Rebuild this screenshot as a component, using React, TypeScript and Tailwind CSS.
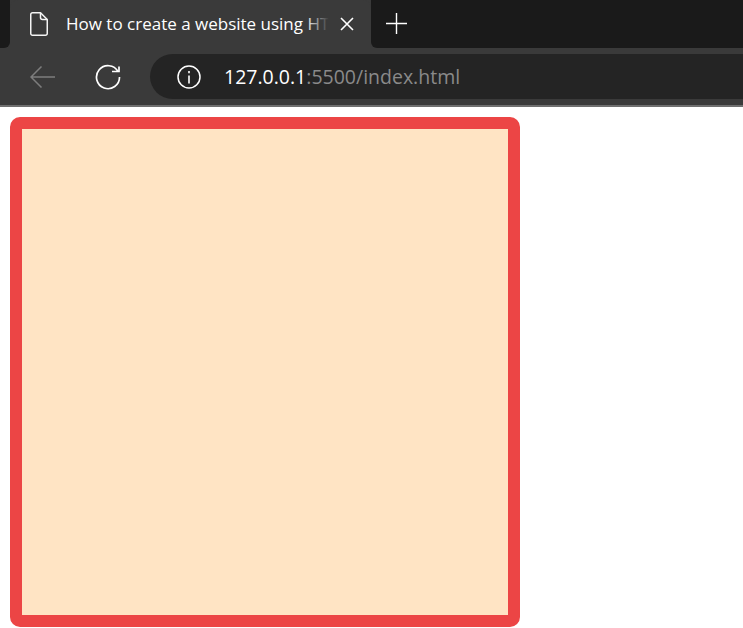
export default function App() {
  return (
    <div className="h-[628px] w-[743px] overflow-hidden bg-white font-['Open_Sans',sans-serif]">
      <div className="flex h-[48px] bg-[#3a3a3a]">
        <div className="h-[48px] w-[10px] rounded-br-[6px] bg-[#1a1a1a]" />
        <div className="flex h-[48px] w-[361px] items-center rounded-t-[8px] bg-[#3a3a3a] pl-[20px]">
          <svg width="18" height="24" viewBox="0 0 18 24" fill="none" stroke="#f4f4f4" strokeWidth="1.5" strokeLinejoin="round">
            <path d="M2.500 0.750h8l6.750 6.750V21.500a1.750 1.750 0 0 1-1.750 1.750h-13a1.750 1.750 0 0 1-1.750-1.750v-19a1.750 1.750 0 0 1 1.750-1.750z" />
            <path d="M10.500 0.750v4.750a2 2 0 0 0 2 2h4.750" />
          </svg>
          <div className="relative ml-[18px] w-[266px] whitespace-nowrap text-[17px] leading-[24px] text-white">
            How to create a website using HT
            <div className="absolute right-0 top-0 h-full w-[27px] bg-gradient-to-r from-transparent to-[#3a3a3a] to-[88%]" />
          </div>
          <svg className="ml-[8px]" width="14" height="14" viewBox="0 0 14 14" stroke="#ffffff" strokeWidth="1.6">
            <path d="M1 1l12 12M13 1L1 13" />
          </svg>
        </div>
        <div className="flex h-[48px] flex-1 rounded-bl-[6px] bg-[#1a1a1a] pl-[15px] pt-[13px]">
          <svg width="21" height="21" viewBox="0 0 21 21" stroke="#ffffff" strokeWidth="1.400">
            <path d="M10.500 0v21M0 10.500h21" />
          </svg>
        </div>
      </div>
      <div className="flex h-[57px] items-center bg-[#3a3a3a]">
        <svg className="ml-[30px]" width="25" height="22" viewBox="0 0 25 22" fill="none" stroke="#7d7d7d" strokeWidth="1.500">
          <path d="M25 11H1.500M11.500 0.500L1 11l10.500 10.500" />
        </svg>
        <svg className="ml-[40px]" width="26" height="26" viewBox="0 0 26 26" fill="none" stroke="#ffffff" strokeWidth="1.700">
          <path d="M23 7.500A11.500 11.500 0 1 0 24.500 13" />
          <path d="M17 7.500h7V2.500" />
        </svg>
        <div className="ml-[29px] flex h-[45px] flex-1 items-center rounded-l-[22.500px] bg-[#242424] pl-[27px]">
          <svg width="24" height="24" viewBox="0 0 24 24" fill="none" stroke="#ffffff">
            <circle cx="12" cy="12" r="11" strokeWidth="1.500" />
            <path d="M12 10.500V18.500M12 6v2.200" strokeWidth="1.600" />
          </svg>
          <div className="ml-[23px] whitespace-nowrap text-[19.500px] leading-[26px] text-[#8a8a8a]">
            <span className="text-white">127.0.0.1</span>:5500/index.html
          </div>
        </div>
      </div>
      <div className="h-[2px] bg-[#6f6f6f]" />
      <div className="ml-[10px] mt-[10px] h-[510px] w-[510px] rounded-[10px] border-[12px] border-[#ec4545] bg-[#ffe4c4]" />
    </div>
  );
}
